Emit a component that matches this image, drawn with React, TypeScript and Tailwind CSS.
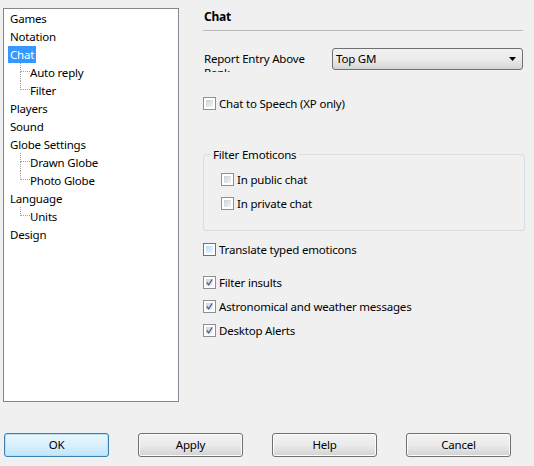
import type { ReactNode } from "react";

type TreeNode = { label: string; selected?: boolean; children?: string[] };

const TREE: TreeNode[] = [
  { label: "Games" },
  { label: "Notation" },
  { label: "Chat", selected: true, children: ["Auto reply", "Filter"] },
  { label: "Players" },
  { label: "Sound" },
  { label: "Globe Settings", children: ["Drawn Globe", "Photo Globe"] },
  { label: "Language", children: ["Units"] },
  { label: "Design" },
];

function TreeRow({ label, selected }: { label: string; selected?: boolean }) {
  return (
    <div className="h-[18px] flex items-center">
      <span
        className={`leading-[17px] h-[17px] px-[2px] ${
          selected ? "bg-[#3399ff] text-white" : "text-black"
        }`}
      >
        {label}
      </span>
    </div>
  );
}

function TreeChild({ label, last }: { label: string; last: boolean }) {
  return (
    <div className="h-[18px] flex">
      <div className="w-[12px] shrink-0" />
      <div className="w-[10px] shrink-0 flex flex-col">
        <div className="h-[9px] border-l border-b border-dotted border-[#a0a0a0]" />
        <div
          className={`h-[9px] ${last ? "" : "border-l border-dotted border-[#a0a0a0]"}`}
        />
      </div>
      <div className="flex items-center">
        <span className="leading-[17px]">{label}</span>
      </div>
    </div>
  );
}

function Tree() {
  return (
    <div className="mt-[8px] ml-[3px] w-[176px] h-[394px] shrink-0 border border-[#828790] bg-white pl-[4px]">
      {TREE.map((n) => (
        <div key={n.label}>
          <TreeRow label={n.label} selected={n.selected} />
          {n.children?.map((c, i) => (
            <TreeChild key={c} label={c} last={i === n.children!.length - 1} />
          ))}
        </div>
      ))}
    </div>
  );
}

function Check({
  label,
  checked,
  hover,
  className = "",
}: {
  label: string;
  checked?: boolean;
  hover?: boolean;
  className?: string;
}) {
  return (
    <div className={`h-[13px] flex items-center gap-[3px] ${className}`}>
      <div
        className={`w-[13px] h-[13px] shrink-0 border p-[2px] bg-white ${
          hover ? "border-[#3c7fb1]" : "border-[#8e8f8f]"
        }`}
      >
        <div
          className={`w-full h-full flex items-center justify-center ${
            hover
              ? "bg-linear-to-br from-[#b9e0f7] to-[#eaf6fd]"
              : "bg-linear-to-br from-[#cbcfd5] to-[#f6f6f6]"
          }`}
        >
          {checked && (
            <svg width="9" height="9" viewBox="0 0 9 9" className="-mt-[1px]">
              <path
                d="M1 4.5 L3.5 7.5 L8 0.5"
                fill="none"
                stroke="#4a5f97"
                strokeWidth="1.6"
              />
            </svg>
          )}
        </div>
      </div>
      <span className="leading-[16px] whitespace-nowrap">{label}</span>
    </div>
  );
}

function Button({ children, primary }: { children: ReactNode; primary?: boolean }) {
  return (
    <button
      className={`w-[105px] h-[24px] rounded-[3px] border flex items-center justify-center ${
        primary
          ? "border-[#3c7fb1] bg-linear-to-b from-[#eaf6fd] via-[#d9f0fc] to-[#bee6fd] shadow-[inset_0_0_0_1px_#b8e0f9]"
          : "border-[#707070] bg-linear-to-b from-[#f2f2f2] via-[#ebebeb] to-[#d2d2d2] shadow-[inset_0_0_0_1px_#fcfcfc]"
      }`}
    >
      {children}
    </button>
  );
}

function ChatPanel() {
  return (
    <div className="ml-[24px] w-[320px] flex flex-col">
      <div className="h-[31px] border-b border-[#b9b9b9] pt-[8px] pl-[1px]">
        <span className="font-bold leading-[16px] text-[12px]">Chat</span>
      </div>

      <div className="mt-[17px] flex items-start">
        <div className="w-[112px] h-[20px] mt-[4px] pl-[1px] overflow-hidden leading-[14px]">
          Report Entry Above Rank
        </div>
        <div className="ml-[17px] w-[191px] h-[22px] rounded-[3px] border border-[#707070] bg-linear-to-b from-[#f2f2f2] via-[#ebebeb] to-[#d5d5d5] flex items-center pl-[3px] pr-[6px]">
          <span className="flex-1">Top GM</span>
          <svg width="7" height="4" viewBox="0 0 7 4">
            <path d="M0 0 H7 L3.5 4 Z" fill="#000" />
          </svg>
        </div>
      </div>

      <Check className="mt-[25px]" label="Chat to Speech (XP only)" />

      <div className="mt-[44px] relative w-[322px] h-[77px] border border-[#d5dfe5] rounded-[3px] pl-[17px] pt-[18px]">
        <span className="absolute -top-[8px] left-[6px] px-[3px] bg-[#f0f0f0] leading-[16px]">
          Filter Emoticons
        </span>
        <Check label="In public chat" />
        <Check className="mt-[11px]" label="In private chat" />
      </div>

      <Check className="mt-[12px]" label="Translate typed emoticons" hover />
      <Check className="mt-[20px]" label="Filter insults" checked />
      <Check className="mt-[11px]" label="Astronomical and weather messages" checked />
      <Check className="mt-[11px]" label="Desktop Alerts" checked />
    </div>
  );
}

export default function App() {
  return (
    <div
      className="w-[534px] h-[466px] bg-[#f0f0f0] text-black text-[11.5px] tracking-[-0.2px] flex flex-col overflow-hidden"
      style={{ fontFamily: '"Noto Sans", "Open Sans", sans-serif' }}
    >
      <div className="flex">
        <Tree />
        <ChatPanel />
      </div>
      <div className="mt-[31px] ml-[4px] flex gap-[29px]">
        <Button primary>OK</Button>
        <Button>Apply</Button>
        <Button>Help</Button>
        <Button>Cancel</Button>
      </div>
    </div>
  );
}
